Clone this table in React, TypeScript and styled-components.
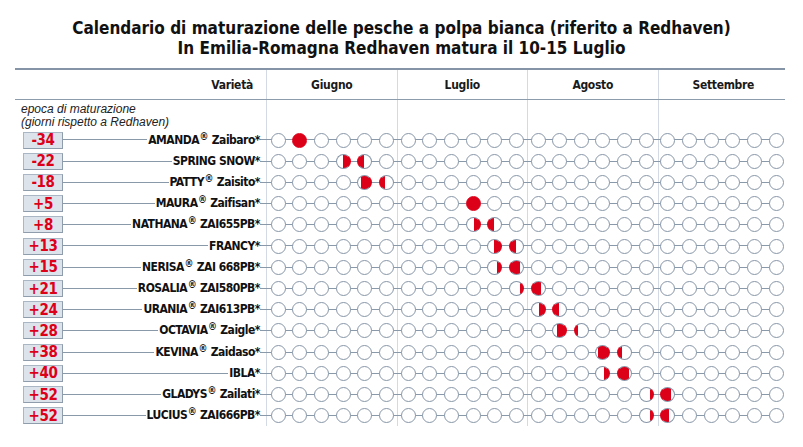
import React from "react";
import styled, { createGlobalStyle } from "styled-components";

const COND = `"Liberation Sans Narrow", "DejaVu Sans Condensed", "Liberation Sans", sans-serif`;
const RED = "#dc0019";
const LINE = "#8a99aa";
const GRID = "#d3dae3";

const LABEL_W = 251;
const MONTH_W = 130.5;
const SLOT = 21.65;
const TRACK_PAD = 1.5;
const ROW_H = 21.23;

const Global = createGlobalStyle`
  html, body { margin: 0; padding: 0; background: #fff; }
  body { width: 803px; height: 447px; overflow: hidden; font-family: ${COND}; color: #111; }
`;

const Page = styled.div`
  width: 803px;
  height: 447px;
  display: flex;
  flex-direction: column;
  padding-top: 18px;
  box-sizing: border-box;
`;

const Title = styled.h1`
  margin: 0 0 10px;
  font-family: ${COND};
  font-stretch: condensed;
  font-weight: bold;
  font-size: 17px;
  line-height: 20px;
  text-align: center;
  color: #111;
`;

const Table = styled.div`
  margin-left: 15px;
  width: ${LABEL_W + MONTH_W * 4}px;
`;

const Header = styled.div`
  display: grid;
  grid-template-columns: ${LABEL_W}px repeat(4, ${MONTH_W}px);
  border-top: 2px solid #8595a7;
  border-bottom: 1.5px solid #8d9cad;
  height: 29px;
  margin-right: 3px;
`;

const HeadCell = styled.div<{ $first?: boolean }>`
  display: flex;
  align-items: center;
  justify-content: ${(p) => (p.$first ? "flex-end" : "center")};
  padding-right: ${(p) => (p.$first ? "13px" : "0")};
  border-left: ${(p) => (p.$first ? "none" : `1px solid ${GRID}`)};
  font-family: ${COND};
  font-stretch: condensed;
  font-weight: bold;
  font-size: 12px;
  letter-spacing: -0.3px;
  color: #1a1a1a;
`;

const Body = styled.div`
  display: grid;
  grid-template-columns: ${LABEL_W}px repeat(4, ${MONTH_W}px);
  grid-template-rows: 29.4px repeat(14, ${ROW_H}px);
`;

const MonthCol = styled.div<{ $col: number }>`
  grid-row: 1 / -1;
  grid-column: ${(p) => p.$col};
  border-left: 1px solid ${GRID};
`;

const Caption = styled.div`
  grid-row: 1;
  grid-column: 1;
  padding: 3px 0 0 6px;
  font-family: "Liberation Sans", Arial, sans-serif;
  font-style: italic;
  font-size: 12px;
  line-height: 12.5px;
  color: #222;
`;

const Row = styled.div<{ $r: number }>`
  grid-row: ${(p) => p.$r};
  grid-column: 1 / -1;
  z-index: 1;
  display: flex;
  align-items: center;
  background-image: linear-gradient(${LINE}, ${LINE});
  background-repeat: no-repeat;
  background-size: ${LABEL_W - 48 + TRACK_PAD + 23 * SLOT + SLOT / 2}px 1.3px;
  background-position: 48px 50%;
`;

const LabelPart = styled.div`
  flex: 0 0 ${LABEL_W}px;
  display: flex;
  align-items: center;
  padding: 0 6px 0 8px;
  box-sizing: border-box;
`;

const Badge = styled.div`
  flex: 0 0 40px;
  height: 17px;
  box-sizing: border-box;
  border: 1px solid #aab6c3;
  border-right-color: #8e9cab;
  border-bottom-color: #8e9cab;
  background: #dde3ea;
  display: flex;
  align-items: center;
  justify-content: center;
  font-family: ${COND};
  font-stretch: condensed;
  font-weight: bold;
  font-size: 15px;
  letter-spacing: -0.4px;
  color: ${RED};
`;

const Spacer = styled.div`
  flex: 1;
`;

const Name = styled.div`
  background: #fff;
  padding-left: 1px;
  font-family: ${COND};
  font-stretch: condensed;
  font-weight: bold;
  font-size: 12px;
  letter-spacing: -0.5px;
  line-height: 15px;
  color: #111;
  white-space: nowrap;
`;

const Reg = styled.sup`
  font-size: 10px;
  line-height: 0;
  vertical-align: 4px;
  margin-left: 0.5px;
  letter-spacing: 0;
`;

const Track = styled.div`
  display: flex;
  padding-left: ${TRACK_PAD}px;
`;

const Slot = styled.div`
  flex: 0 0 ${SLOT}px;
  display: flex;
  justify-content: center;
`;

const Dot = styled.div<{ $from: number; $to: number }>`
  width: 15px;
  height: 15px;
  box-sizing: border-box;
  border-radius: 50%;
  border: 1px solid ${(p) => (p.$from <= 0 && p.$to >= 1 ? RED : "#8796a8")};
  border-right-color: ${(p) => (p.$to >= 1 ? RED : "#8796a8")};
  border-left-color: ${(p) => (p.$from <= 0 && p.$to > 0 ? RED : "#8796a8")};
  background: ${(p) =>
    p.$to <= p.$from
      ? "#fff"
      : `linear-gradient(to right, #fff ${p.$from * 100}%, ${RED} ${p.$from * 100}%, ${RED} ${p.$to * 100}%, #fff ${p.$to * 100}%)`};
`;

type Fill = Record<number, [number, number]>;
type Variety = { d: string; name: string; reg: boolean; sub?: string; fills: Fill };

const DATA: Variety[] = [
  { d: "-34", name: "AMANDA", reg: true, sub: "Zaibaro", fills: { 1: [0, 1] } },
  { d: "-22", name: "SPRING SNOW", reg: false, fills: { 3: [0.5, 1], 4: [0, 0.5] } },
  { d: "-18", name: "PATTY", reg: true, sub: "Zaisito", fills: { 4: [0.25, 1], 5: [0, 0.35] } },
  { d: "+5", name: "MAURA", reg: true, sub: "Zaifisan", fills: { 9: [0, 1] } },
  { d: "+8", name: "NATHANA", reg: true, sub: "ZAI655PB", fills: { 9: [0.5, 1], 10: [0, 0.5] } },
  { d: "+13", name: "FRANCY", reg: false, fills: { 10: [0.5, 1], 11: [0, 0.5] } },
  { d: "+15", name: "NERISA", reg: true, sub: "ZAI 668PB", fills: { 10: [0.7, 1], 11: [0, 0.8] } },
  { d: "+21", name: "ROSALIA", reg: true, sub: "ZAI580PB", fills: { 11: [0.75, 1], 12: [0, 0.7] } },
  { d: "+24", name: "URANIA", reg: true, sub: "ZAI613PB", fills: { 12: [0.5, 1], 13: [0, 0.5] } },
  { d: "+28", name: "OCTAVIA", reg: true, sub: "Zaigle", fills: { 13: [0.3, 1], 14: [0, 0.25] } },
  { d: "+38", name: "KEVINA", reg: true, sub: "Zaidaso", fills: { 15: [0.15, 1], 16: [0, 0.3] } },
  { d: "+40", name: "IBLA", reg: false, fills: { 15: [0.65, 1], 16: [0, 0.85] } },
  { d: "+52", name: "GLADYS", reg: true, sub: "Zailati", fills: { 17: [0.75, 1], 18: [0, 0.8] } },
  { d: "+52", name: "LUCIUS", reg: true, sub: "ZAI666PB", fills: { 17: [0.75, 1], 18: [0, 0.6] } },
];

const MONTHS = ["Giugno", "Luglio", "Agosto", "Settembre"];

export default function App() {
  return (
    <>
      <Global />
      <Page>
        <Title>
          Calendario di maturazione delle pesche a polpa bianca (riferito a Redhaven)
          <br />
          In Emilia-Romagna Redhaven matura il 10-15 Luglio
        </Title>
        <Table>
          <Header>
            <HeadCell $first>Varietà</HeadCell>
            {MONTHS.map((m) => (
              <HeadCell key={m}>{m}</HeadCell>
            ))}
          </Header>
          <Body>
            {[2, 3, 4, 5].map((c) => (
              <MonthCol key={c} $col={c} />
            ))}
            <Caption>
              epoca di maturazione
              <br />
              (giorni rispetto a Redhaven)
            </Caption>
            {DATA.map((v, i) => (
              <Row key={i} $r={i + 2}>
                <LabelPart>
                  <Badge>{v.d}</Badge>
                  <Spacer />
                  <Name>
                    {v.name}
                    {v.reg && <Reg>®</Reg>}
                    {v.sub ? ` ${v.sub}` : ""}*
                  </Name>
                </LabelPart>
                <Track>
                  {Array.from({ length: 24 }).map((_, k) => {
                    const f = v.fills[k] || [0, 0];
                    return (
                      <Slot key={k}>
                        <Dot $from={f[0]} $to={f[1]} />
                      </Slot>
                    );
                  })}
                </Track>
              </Row>
            ))}
          </Body>
        </Table>
      </Page>
    </>
  );
}
